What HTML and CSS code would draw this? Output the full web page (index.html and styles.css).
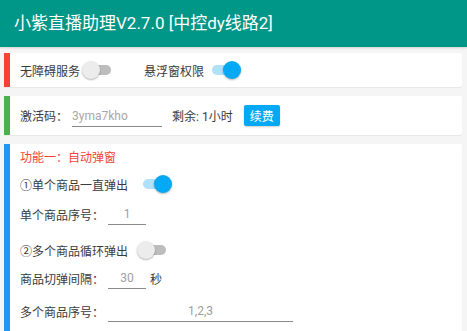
FILE: index.html
```html
<!DOCTYPE html>
<html lang="zh-CN">
<head>
    <meta charset="UTF-8">
    <meta name="viewport" content="width=device-width, initial-scale=1.0">
    <title>小紫直播助理</title>
    <link rel="stylesheet" href="styles.css">
</head>
<body>

    <header class="app-bar">小紫直播助理V2.7.0 [中控dy线路2]</header>

    <div class="card card-red perm-row">
        <span class="label">无障碍服务</span>
        <span class="switch"></span>
        <span class="label perm-gap">悬浮窗权限</span>
        <span class="switch on"></span>
    </div>

    <div class="card card-green code-row">
        <span class="label">激活码：</span>
        <input class="field field-code" type="text" placeholder="3yma7kho">
        <span class="label left-time">剩余: 1小时</span>
        <button class="renew">续费</button>
    </div>

    <div class="card card-blue func">
        <div class="func-title">功能一：自动弹窗</div>

        <div class="row row-switch">
            <span class="label">①单个商品一直弹出</span>
            <span class="switch wide on"></span>
        </div>

        <div class="row row-single">
            <span class="label">单个商品序号：</span>
            <input class="field field-small" type="text" value="1">
        </div>

        <div class="row row-switch2">
            <span class="label">②多个商品循环弹出</span>
            <span class="switch wide"></span>
        </div>

        <div class="row row-interval">
            <span class="label">商品切弹间隔：</span>
            <input class="field field-small" type="text" value="30">
            <span class="label unit">秒</span>
        </div>

        <div class="row row-multi">
            <span class="label">多个商品序号：</span>
            <input class="field field-long" type="text" value="1,2,3">
        </div>

        <div class="hint">提示：多个商品序号用英文逗号隔开，如：1,2,3</div>
    </div>

</body>
</html>
```

FILE: styles.css
```css
body {
    margin: 0;
    background-color: #f5f5f5;
    font-family: Roboto, "Noto Sans CJK SC", sans-serif;
    font-size: 12px;
    color: #3a3a3a;
}
.app-bar {
    height: 47px;
    line-height: 47px;
    padding-left: 14px;
    background-color: #009688;
    color: white;
    font-size: 17px;
    font-weight: normal;
    box-shadow: 0 1px 2px rgba(0, 0, 0, 0.15);
}
.card {
    margin: 0 5px 9px 4px;
    padding-left: 10px;
    background: white;
    border-radius: 0 2px 2px 0;
    box-shadow: 0 1px 1px rgba(0, 0, 0, 0.06);
}
.card-red {
    border-left: 6px solid #f44336;
    margin-top: 6px;
}
.card-green {
    border-left: 6px solid #4caf50;
}
.card-blue {
    border-left: 6px solid #2196f3;
}
.label {
    white-space: nowrap;
}
.perm-row {
    height: 34px;
    display: flex;
    align-items: center;
}
.perm-gap {
    margin-left: 27px;
}

/* switch */
.switch {
    position: relative;
    display: inline-block;
    width: 35px;
    height: 20px;
    margin-left: 2px;
}
.switch::before {
    content: "";
    position: absolute;
    left: 6px;
    top: 5px;
    width: 23px;
    height: 10px;
    border-radius: 5px;
    background-color: #bdbdbd;
}
.switch::after {
    content: "";
    position: absolute;
    left: 0;
    top: 1px;
    width: 18px;
    height: 18px;
    border-radius: 50%;
    background-color: #ececec;
    box-shadow: 0 1px 2px rgba(0, 0, 0, 0.3);
}
.switch.on::before {
    background-color: #b0e0fa;
}
.switch.on::after {
    left: 17px;
    background-color: #03a9f4;
}
.switch.wide {
    margin-left: 9px;
}

.code-row {
    height: 39px;
    display: flex;
    align-items: center;
}
.field {
    box-sizing: border-box;
    height: 21px;
    margin-left: 4px;
    padding: 0;
    border: none;
    border-bottom: 1px solid #8a8a8a;
    outline: none;
    background: transparent;
    font-family: Roboto, "Noto Sans CJK SC", sans-serif;
    font-size: 12px;
    color: #9e9e9e;
}
.field::placeholder {
    color: #a8a8a8;
}
.field-code {
    width: 90px;
    margin-top: 1px;
}
.left-time {
    margin-left: 10px;
}
.renew {
    width: 36px;
    height: 21px;
    margin-left: 11px;
    padding: 0;
    border: none;
    border-radius: 2px;
    background-color: #03a9f4;
    color: white;
    font-family: Roboto, "Noto Sans CJK SC", sans-serif;
    font-size: 12px;
    box-shadow: 0 1px 2px rgba(0, 0, 0, 0.2);
}

.func {
    padding-top: 6px;
    padding-bottom: 20px;
}
.func-title {
    height: 16px;
    line-height: 16px;
    color: #f44336;
}
.row {
    display: flex;
    align-items: center;
}
.row-switch {
    height: 20px;
    margin-top: 8px;
}
.row-single {
    margin-top: 10px;
}
.row-switch2 {
    height: 20px;
    margin-top: 15px;
}
.row-interval {
    margin-top: 8px;
}
.row-multi {
    margin-top: 12px;
}
.field-small {
    width: 38px;
    text-align: center;
}
.field-long {
    width: 185px;
    text-align: center;
}
.unit {
    margin-left: 4px;
}
.hint {
    margin-top: 8px;
    line-height: 16px;
    color: #5cbf60;
}
```
